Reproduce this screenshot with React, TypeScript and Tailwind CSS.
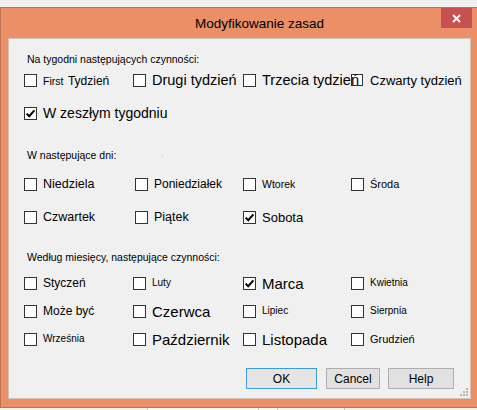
import React from 'react';

type Opt = { label: React.ReactNode; size: string; checked?: boolean; small?: boolean; over?: boolean };

function Box({ checked, small }: { checked?: boolean; small?: boolean }) {
  return (
    <span
      className={`shrink-0 border border-[#333333] bg-white flex items-center justify-center ${
        small ? 'w-[12px] h-[12px]' : 'w-[13px] h-[13px]'
      }`}
    >
      {checked && (
        <svg width="11" height="11" viewBox="0 0 11 11">
          <path d="M1.6 5.6 L4.2 8.2 L9.4 2.4" fill="none" stroke="#000" strokeWidth="2" />
        </svg>
      )}
    </span>
  );
}

function Item({ opt, width }: { opt: Opt; width: string }) {
  return (
    <div className={`flex items-center gap-[6px] shrink-0 ${width}`}>
      <Box checked={opt.checked} small={opt.small} />
      <span className={`whitespace-nowrap text-black leading-none ${opt.size} ${opt.over ? 'relative z-10' : ''}`}>
        {opt.label}
      </span>
    </div>
  );
}

function Row({ items, widths, className = '' }: { items: Opt[]; widths: string[]; className?: string }) {
  return (
    <div className={`flex items-center h-[22px] pl-[15px] ${className}`}>
      {items.map((o, i) => (
        <Item key={i} opt={o} width={widths[i]} />
      ))}
    </div>
  );
}

function Header({ children, className = '' }: { children: React.ReactNode; className?: string }) {
  return (
    <div className={`flex items-center h-[14px] pl-[18px] text-[10.5px] text-black leading-none ${className}`}>
      {children}
    </div>
  );
}

const cols = ['w-[109px]', 'w-[110px]', 'w-[108px]', 'w-[100px]'];
const dayCols = ['w-[111px]', 'w-[108px]', 'w-[108px]', 'w-[100px]'];

export default function App() {
  return (
    <div className="w-[477px] h-[410px] overflow-hidden bg-[#f0f0f0] font-['Liberation_Sans',Arial,sans-serif] select-none">
      <div className="h-[7px]" />

      {/* window frame */}
      <div className="h-[401px] w-[477px] bg-[#ea8f66] border-l border-t border-b border-[#b97456] flex flex-col">
        {/* title bar */}
        <div className="h-[30px] flex items-start shrink-0">
          <span className="pl-[194px] pt-[9px] text-[13.5px] leading-none text-black">Modyfikowanie zasad</span>
          <div className="ml-auto mr-[5px] w-[31px] h-[20px] bg-[#c75050] flex items-center justify-center">
            <svg width="9" height="9" viewBox="0 0 9 9">
              <path d="M1 1 L8 8 M8 1 L1 8" stroke="#fff" strokeWidth="2" />
            </svg>
          </div>
        </div>

        {/* client area */}
        <div className="relative ml-[7px] w-[463px] h-[361px] shrink-0 bg-[#f0f0f0] border border-[#d2c2b8] flex flex-col">
          <Header className="mt-[13px]">Na tygodni następujących czynności:</Header>
          <Row
            className="mt-[3px]"
            widths={cols}
            items={[
              {
                label: (
                  <>
                    <span className="text-[10.5px]">First</span> <span className="text-[12px]">Tydzień</span>
                  </>
                ),
                size: '',
              },
              { label: 'Drugi tydzień', size: 'text-[14.5px]' },
              { label: 'Trzecia tydzień', size: 'text-[14.5px]', over: true },
              { label: 'Czwarty tydzień', size: 'text-[13px] pl-[1px]', small: true },
            ]}
          />
          <Row
            className="mt-[11px]"
            widths={cols}
            items={[{ label: 'W zeszłym tygodniu', size: 'text-[14px]', checked: true }]}
          />

          <Header className="mt-[24px]">
            W następujące dni:
            <span className="ml-[46px] w-[1px] h-[1px] bg-[#8fd8d8]" />
          </Header>
          <Row
            className="mt-[11px]"
            widths={dayCols}
            items={[
              { label: 'Niedziela', size: 'text-[12.5px]' },
              { label: 'Poniedziałek', size: 'text-[12px]' },
              { label: 'Wtorek', size: 'text-[10.5px]' },
              { label: 'Środa', size: 'text-[11px]' },
            ]}
          />
          <Row
            className="mt-[11px]"
            widths={dayCols}
            items={[
              { label: 'Czwartek', size: 'text-[12.5px]' },
              { label: 'Piątek', size: 'text-[12.5px]' },
              { label: 'Sobota', size: 'text-[13px]', checked: true },
            ]}
          />

          <Header className="mt-[22px]">Według miesięcy, następujące czynności:</Header>
          <Row
            className="mt-[8px]"
            widths={cols}
            items={[
              { label: 'Styczeń', size: 'text-[12px]' },
              { label: 'Luty', size: 'text-[10px]' },
              { label: 'Marca', size: 'text-[15px]', checked: true },
              { label: 'Kwietnia', size: 'text-[10px]' },
            ]}
          />
          <Row
            className="mt-[6px]"
            widths={cols}
            items={[
              { label: 'Może być', size: 'text-[12px]' },
              { label: 'Czerwca', size: 'text-[15px]' },
              { label: 'Lipiec', size: 'text-[10px]' },
              { label: 'Sierpnia', size: 'text-[10px]' },
            ]}
          />
          <Row
            className="mt-[6px]"
            widths={cols}
            items={[
              { label: 'Września', size: 'text-[10px]' },
              { label: 'Październik', size: 'text-[15px]' },
              { label: 'Listopada', size: 'text-[15px]' },
              { label: 'Grudzień', size: 'text-[11px]' },
            ]}
          />

          {/* buttons */}
          <div className="mt-[18px] flex justify-end pr-[16px] gap-[8px]">
            <button className="w-[71px] h-[21px] border border-[#3c9be8] bg-[#e5e5e5] text-[12px] text-black leading-none mr-[1px]">
              OK
            </button>
            <button className="w-[54px] h-[21px] border border-[#adadad] bg-[#e1e1e1] text-[12px] text-black leading-none">
              Cancel
            </button>
            <button className="w-[66px] h-[21px] border border-[#adadad] bg-[#e1e1e1] text-[12px] text-black leading-none">
              Help
            </button>
          </div>

          {/* size grip */}
          <svg className="absolute right-[2px] bottom-[2px]" width="8" height="8" viewBox="0 0 8 8">
            <rect x="6" y="0" width="2" height="2" fill="#b4b4b4" />
            <rect x="3" y="3" width="2" height="2" fill="#b4b4b4" />
            <rect x="6" y="3" width="2" height="2" fill="#b4b4b4" />
            <rect x="0" y="6" width="2" height="2" fill="#b4b4b4" />
            <rect x="3" y="6" width="2" height="2" fill="#b4b4b4" />
            <rect x="6" y="6" width="2" height="2" fill="#b4b4b4" />
          </svg>
        </div>
      </div>

      {/* desktop content peeking below */}
      <div className="h-[2px] flex">
        <div className="w-[147px]" />
        <div className="w-[1px] bg-[#c8c8c8]" />
        <div className="w-[110px] bg-[#fafafa]" />
        <div className="w-[1px] bg-[#c8c8c8]" />
        <div className="w-[18px] bg-[#fafafa]" />
        <div className="w-[1px] bg-[#c8c8c8]" />
        <div className="w-[66px] bg-[#f4f4f4]" />
        <div className="w-[1px] bg-[#c8c8c8]" />
      </div>
    </div>
  );
}
